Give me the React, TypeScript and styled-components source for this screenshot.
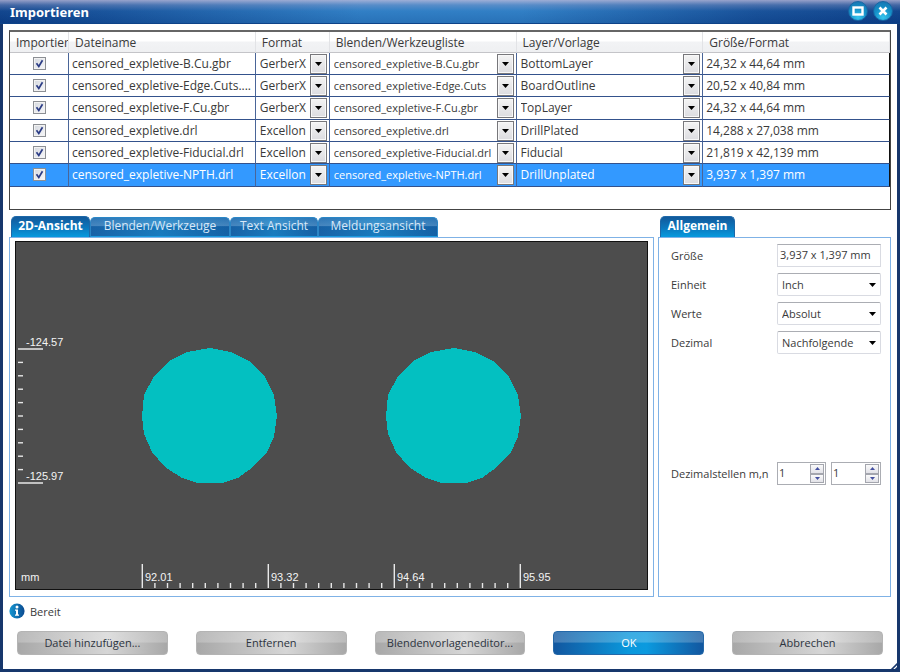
import React, { useState } from "react";
import styled, { createGlobalStyle, css } from "styled-components";

const GlobalStyle = createGlobalStyle`
  *, *::before, *::after { box-sizing: border-box; }
  body { margin: 0; background: #fff; }
  body, button, input, select {
    font-family: "Open Sans", "Noto Sans", sans-serif;
    font-size: 11px;
    color: #3a3a3a;
  }
`;

const Window = styled.div`
  position: relative;
  display: flex;
  flex-direction: column;
  min-height: 100vh;
  background: #fff;
  border: 3px solid #17376c;
  border-top: 0;
`;

const TitleBar = styled.header`
  display: flex;
  align-items: center;
  height: 24px;
  flex: none;
  margin: 0 -3px;
  padding: 0 7px 0 10px;
  border-bottom: 1px solid #0e4388;
  background:
    linear-gradient(180deg, rgba(196, 190, 220, 0.75) 0, rgba(150, 160, 205, 0.4) 5px, rgba(70, 120, 190, 0.1) 11px, rgba(0, 30, 100, 0.15) 100%),
    linear-gradient(90deg, #0d4189 0, #16529a 12%, #2f80c6 40%, #2f80c6 58%, #154f97 84%, #0d4189 100%);
`;

const Title = styled.h1`
  flex: 1;
  margin: 0;
  color: #fff;
  font-family: "Noto Sans", sans-serif;
  font-size: 13px;
  line-height: 20px;
  font-weight: 700;
`;

const RoundButton = styled.button`
  width: 20px;
  height: 20px;
  margin: 0 0 2px 5px;
  padding: 0;
  display: grid;
  place-items: center;
  border: 1px solid #1766a4;
  border-radius: 50%;
  background: radial-gradient(circle at 50% 85%, #35c4ee 0, #1490c8 50%, #1a70ac 100%);
`;

const TableFrame = styled.section`
  margin: 6px 6px 0;
  height: 180px;
  flex: none;
  border: 1px solid #444;
  border-top: 2px solid #666;
`;

const Table = styled.table`
  width: 100%;
  table-layout: fixed;
  border-collapse: separate;
  border-spacing: 0;
  font-size: 12px;
`;

const CheckCol = styled.col`
  width: 59px;
`;

const FormatCol = styled.col`
  width: 74px;
`;

const HeadCell = styled.th`
  height: 21px;
  padding: 1px 0 0 6px;
  overflow: hidden;
  white-space: nowrap;
  text-align: left;
  font-weight: 400;
  line-height: 18px;
  border-right: 1px solid #e2e3e6;
  border-bottom: 1px solid #c4c4c8;
  background: linear-gradient(#fff 0, #fff 45%, #f2f3f5 50%, #eff0f2 100%);
`;

const Row = styled.tr<{ $selected: boolean }>`
  height: 22px;
  &:nth-child(3n) { height: 23px; }
  ${(p) => p.$selected && css`
    background: #3399ff;
    && td, && select { color: #fff; }
  `}
`;

const Cell = styled.td<{ $center?: boolean }>`
  padding: 0 0 0 3px;
  overflow: hidden;
  white-space: nowrap;
  line-height: 18px;
  border-right: 1px solid #4a6598;
  border-bottom: 1px solid #34528c;
  ${(p) => p.$center && css`padding: 0; text-align: center;`}
  &:last-child { border-right-color: #111; }
`;

const Check = styled.input`
  appearance: none;
  display: block;
  width: 13px;
  height: 13px;
  margin: 0 auto;
  border: 1px solid #8c8f94;
  background: linear-gradient(135deg, #d4d8de, #f8f8fa);
  box-shadow: inset 0 0 0 1px #f2f2f2;
  grid-area: 1 / 1;
`;

const CheckBox = styled.label`
  display: inline-grid;
  place-items: center;
  vertical-align: middle;
  margin-bottom: 2px;
  svg { grid-area: 1 / 1; pointer-events: none; }
`;

const Combo = styled.div`
  display: grid;
  grid-template-columns: 1fr 17px;
  padding-right: 2px;
`;

const ComboSelect = styled.select<{ $compact?: boolean }>`
  grid-area: 1 / 1 / 2 / 3;
  appearance: none;
  width: 100%;
  min-width: 0;
  height: 20px;
  padding: 0 18px 0 1px;
  border: 0;
  background: transparent;
  font-size: ${(p) => (p.$compact ? 11 : 12)}px;
  line-height: 18px;
  text-overflow: clip;
`;

const ComboArrow = styled.span`
  grid-area: 1 / 2;
  display: grid;
  place-items: center;
  height: 20px;
  pointer-events: none;
  border: 1px solid #77777b;
  box-shadow: inset 0 0 0 1px #f8f8f8;
  background: linear-gradient(#f4f4f4, #dcdce0);
`;

const Panels = styled.main`
  display: flex;
  flex: 1;
  gap: 4px;
  margin: 6px 6px 0;
`;

const PanelColumn = styled.section<{ $side?: boolean }>`
  display: flex;
  flex-direction: column;
  ${(p) => (p.$side ? css`flex: 0 0 233px;` : css`flex: 1; min-width: 0;`)}
`;

const Tabs = styled.div`
  display: flex;
  align-items: flex-end;
  height: 21px;
  padding-left: 2px;
`;

const Tab = styled.button<{ $active?: boolean; $width: number }>`
  width: ${(p) => p.$width}px;
  height: ${(p) => (p.$active ? 21 : 20)}px;
  padding: 0 0 2px;
  border: 1px solid ${(p) => (p.$active ? "#1d68a8" : "#2b86c6")};
  border-bottom: ${(p) => (p.$active ? "0" : "1px solid #1a9ade")};
  border-radius: 5px 5px 0 0;
  font-size: 12px;
  line-height: 16px;
  white-space: nowrap;
  color: ${(p) => (p.$active ? "#fff" : "#d8e8f8")};
  font-weight: ${(p) => (p.$active ? 700 : 400)};
  background: ${(p) =>
    p.$active
      ? "linear-gradient(#12599b 0, #0b78be 55%, #069ade 100%)"
      : "linear-gradient(rgba(120, 190, 235, 0.2) 0, rgba(150, 195, 230, 0.35) 42%, rgba(0, 80, 150, 0.15) 48%, rgba(0, 90, 160, 0.1) 100%), linear-gradient(90deg, #1c64a8 0, #1c80c2 50%, #1862a6 100%)"};
`;

const Panel = styled.div`
  flex: 1;
  display: flex;
  flex-direction: column;
  border: 1px solid #7fb2e6;
`;

const Canvas = styled.svg`
  flex: 1;
  display: block;
  width: calc(100% - 10px);
  margin: 3px 5px 6px;
  border: 1px solid #111;
  background: #4d4d4d;
  font-family: "Liberation Sans", Arial, sans-serif;
  font-size: 11px;
`;

const Form = styled.form`
  display: flex;
  flex-direction: column;
  gap: 6px;
  padding: 6px 9px 0 12px;
`;

const Field = styled.div<{ $spaced?: boolean }>`
  display: grid;
  grid-template-columns: 1fr 104px;
  align-items: center;
  height: 23px;
  margin-top: ${(p) => (p.$spaced ? 102 : 0)}px;
`;

const TextInput = styled.input`
  width: 100%;
  height: 23px;
  padding: 0 2px 2px;
  border: 1px solid #d9dbe2;
  border-top-color: #abadb3;
  background: #fff;
`;

const DropBox = styled.div`
  display: grid;
  grid-template-columns: 1fr 12px;
  align-items: center;
  svg { grid-area: 1 / 2; pointer-events: none; }
`;

const DropSelect = styled.select`
  grid-area: 1 / 1 / 2 / 3;
  appearance: none;
  width: 100%;
  height: 23px;
  padding: 0 14px 0 4px;
  border: 1px solid #d9dbe2;
  border-top-color: #abadb3;
  border-radius: 2px;
  background: #fff;
`;

const Spinners = styled.div`
  display: grid;
  grid-template-columns: 49px 50px;
  justify-content: space-between;
`;

const Spinner = styled.div`
  display: flex;
  height: 23px;
  padding: 1px;
  border: 1px solid #abadb3;
`;

const SpinInput = styled.input`
  flex: 1;
  min-width: 0;
  padding: 0 0 3px;
  border: 0;
  background: transparent;
  outline: 0;
`;

const SpinButtons = styled.div`
  display: grid;
  grid-template-rows: 1fr 1fr;
  width: 14px;
`;

const SpinButton = styled.button`
  display: grid;
  place-items: center;
  padding: 0;
  border: 1px solid #a4a6ae;
  background: linear-gradient(#fafafa, #e2e2e8);
`;

const Status = styled.div`
  display: flex;
  align-items: center;
  gap: 5px;
  height: 16px;
  margin: 6px 6px 0;
`;

const Actions = styled.footer`
  display: flex;
  gap: 28px;
  padding: 12px 14px 14px;
`;

const ActionButton = styled.button<{ $primary?: boolean }>`
  flex: 1 1 0;
  min-width: 0;
  height: 24px;
  padding: 0;
  border: 1px solid ${(p) => (p.$primary ? "#2468a8" : "#b4b4b4")};
  border-radius: 4px;
  line-height: 18px;
  white-space: nowrap;
  color: ${(p) => (p.$primary ? "#fff" : "#2d3440")};
  background: linear-gradient(rgba(255, 255, 255, 0.2) 0, rgba(255, 255, 255, 0.22) 46%, rgba(255, 255, 255, 0) 50%),
    ${(p) =>
      p.$primary
        ? "linear-gradient(90deg, #1257a0 0, #0a98dc 50%, #0b9adf 62%, #1257a0 100%)"
        : "linear-gradient(90deg, #a8a8a8 0, #d6d6d6 60%, #a8a8a8 100%)"};
`;

const Grip = styled.svg`
  position: absolute;
  right: -2px;
  bottom: -2px;
`;

function Arrow() {
  return (
    <svg width="7" height="4" viewBox="0 0 7 4" aria-hidden="true">
      <path d="M0 0h7L3.5 4z" fill="#000" />
    </svg>
  );
}

function TableCombo({ value, label, compact }: { value: string; label: string; compact?: boolean }) {
  return (
    <Combo>
      <ComboSelect $compact={compact} defaultValue={value} aria-label={label}>
        <option>{value}</option>
      </ComboSelect>
      <ComboArrow><Arrow /></ComboArrow>
    </Combo>
  );
}

function DropDown({ id, value }: { id: string; value: string }) {
  return (
    <DropBox>
      <DropSelect id={id} defaultValue={value}>
        <option>{value}</option>
      </DropSelect>
      <Arrow />
    </DropBox>
  );
}

function NumberSpinner({ id, label }: { id: string; label?: string }) {
  const [value, setValue] = useState(1);
  return (
    <Spinner>
      <SpinInput id={id} type="text" inputMode="numeric" aria-label={label} value={value}
        onChange={(e) => setValue(Number(e.target.value) || 0)} />
      <SpinButtons>
        <SpinButton type="button" aria-label="Erhöhen" onClick={() => setValue(value + 1)}>
          <svg width="5" height="3" viewBox="0 0 5 3"><path d="M0 3h5L2.5 0z" fill="#4450a0" /></svg>
        </SpinButton>
        <SpinButton type="button" aria-label="Verringern" onClick={() => setValue(value - 1)}>
          <svg width="5" height="3" viewBox="0 0 5 3"><path d="M0 0h5L2.5 3z" fill="#4450a0" /></svg>
        </SpinButton>
      </SpinButtons>
    </Spinner>
  );
}

const files = [
  { name: "censored_expletive-B.Cu.gbr", format: "GerberX", list: "censored_expletive-B.Cu.gbr", layer: "BottomLayer", size: "24,32 x 44,64 mm" },
  { name: "censored_expletive-Edge.Cuts....", format: "GerberX", list: "censored_expletive-Edge.Cuts", layer: "BoardOutline", size: "20,52 x 40,84 mm" },
  { name: "censored_expletive-F.Cu.gbr", format: "GerberX", list: "censored_expletive-F.Cu.gbr", layer: "TopLayer", size: "24,32 x 44,64 mm" },
  { name: "censored_expletive.drl", format: "Excellon", list: "censored_expletive.drl", layer: "DrillPlated", size: "14,288 x 27,038 mm" },
  { name: "censored_expletive-Fiducial.drl", format: "Excellon", list: "censored_expletive-Fiducial.drl", layer: "Fiducial", size: "21,819 x 42,139 mm" },
  { name: "censored_expletive-NPTH.drl", format: "Excellon", list: "censored_expletive-NPTH.drl", layer: "DrillUnplated", size: "3,937 x 1,397 mm" },
];

const drillHole =
  "172,111 195,107 216,111 234,120 250,136 259,154 262,175 259,196 252,211 238,226 223,237 207,242 182,242 167,237 150,226 137,211 129,193 127,175 129,154 139,135 154,120";

const xLabels = ["92.01", "93.32", "94.64", "95.95"];
const minor = [1, 2, 3, 4, 5, 6, 7, 8, 9];

function BoardView() {
  return (
    <Canvas viewBox="1 1 631 347" role="img" aria-label="2D-Ansicht">
      <g fill="#03c0c1" shapeRendering="crispEdges">
        <polygon points={drillHole} />
        <polygon points={drillHole} transform="translate(244 0)" />
      </g>
      <g stroke="#e8e8e8" strokeWidth="1.4">
        <path d="M3 108h25M3 242h25" />
        {minor.map((n) => <path key={n} d={`M3 ${108 + n * 13.4}h5`} />)}
        {xLabels.map((label, i) => (
          <g key={label}>
            <path d={`M${127.3 + i * 126} 323v24`} />
            {i < 3 && minor.map((n) => <path key={n} d={`M${127.3 + i * 126 + n * 12.6} 342v5`} />)}
          </g>
        ))}
      </g>
      <g fill="#f4f4f4">
        <text x="11" y="105">-124.57</text>
        <text x="11" y="239">-125.97</text>
        <text x="6" y="340">mm</text>
        {xLabels.map((label, i) => <text key={label} x={130 + i * 126} y="340">{label}</text>)}
      </g>
    </Canvas>
  );
}

export default function App() {
  return (
    <>
      <GlobalStyle />
      <Window>
        <TitleBar>
          <Title>Importieren</Title>
          <RoundButton aria-label="Maximieren">
            <svg width="12" height="10" viewBox="0 0 12 10"><rect x="1.5" y="1.5" width="9" height="7" fill="none" stroke="#fff" strokeWidth="2.4" /></svg>
          </RoundButton>
          <RoundButton aria-label="Schließen">
            <svg width="10" height="10" viewBox="0 0 10 10"><path d="M1.5 1.5l7 7M8.5 1.5l-7 7" stroke="#fff" strokeWidth="2.6" /></svg>
          </RoundButton>
        </TitleBar>

        <TableFrame>
          <Table>
            <colgroup>
              <CheckCol /><col /><FormatCol /><col /><col /><col />
            </colgroup>
            <thead>
              <tr>
                {["Importier", "Dateiname", "Format", "Blenden/Werkzeugliste", "Layer/Vorlage", "Größe/Format"].map((h) => (
                  <HeadCell key={h}>{h}</HeadCell>
                ))}
              </tr>
            </thead>
            <tbody>
              {files.map((f, i) => (
                <Row key={f.name} $selected={i === 5}>
                  <Cell $center>
                    <CheckBox>
                      <Check type="checkbox" defaultChecked aria-label={f.name} />
                      <svg width="9" height="9" viewBox="0 0 9 9"><path d="M1.5 4.2L3.8 7.4 7.5 1.2" fill="none" stroke="#2b3c85" strokeWidth="1.7" /></svg>
                    </CheckBox>
                  </Cell>
                  <Cell>{f.name}</Cell>
                  <Cell><TableCombo value={f.format} label="Format" /></Cell>
                  <Cell><TableCombo compact value={f.list} label="Blenden/Werkzeugliste" /></Cell>
                  <Cell><TableCombo value={f.layer} label="Layer/Vorlage" /></Cell>
                  <Cell>{f.size}</Cell>
                </Row>
              ))}
            </tbody>
          </Table>
        </TableFrame>

        <Panels>
          <PanelColumn>
            <Tabs>
              <Tab $active $width={79}>2D-Ansicht</Tab>
              <Tab $width={140}>Blenden/Werkzeuge</Tab>
              <Tab $width={88}>Text Ansicht</Tab>
              <Tab $width={120}>Meldungsansicht</Tab>
            </Tabs>
            <Panel><BoardView /></Panel>
          </PanelColumn>
          <PanelColumn $side>
            <Tabs>
              <Tab $active $width={75}>Allgemein</Tab>
            </Tabs>
            <Panel>
              <Form onSubmit={(e) => e.preventDefault()}>
                <Field>
                  <label htmlFor="size">Größe</label>
                  <TextInput id="size" defaultValue="3,937 x 1,397 mm" />
                </Field>
                <Field>
                  <label htmlFor="unit">Einheit</label>
                  <DropDown id="unit" value="Inch" />
                </Field>
                <Field>
                  <label htmlFor="values">Werte</label>
                  <DropDown id="values" value="Absolut" />
                </Field>
                <Field>
                  <label htmlFor="decimal">Dezimal</label>
                  <DropDown id="decimal" value="Nachfolgende" />
                </Field>
                <Field $spaced>
                  <label htmlFor="digits-m">Dezimalstellen m,n</label>
                  <Spinners>
                    <NumberSpinner id="digits-m" />
                    <NumberSpinner id="digits-n" label="Dezimalstellen n" />
                  </Spinners>
                </Field>
              </Form>
            </Panel>
          </PanelColumn>
        </Panels>

        <Status>
          <svg width="16" height="16" viewBox="0 0 16 16" aria-hidden="true">
            <defs>
              <linearGradient id="info" x1="0" y1="0" x2="1" y2="0">
                <stop offset="0" stopColor="#1597d2" />
                <stop offset="1" stopColor="#0b4a90" />
              </linearGradient>
            </defs>
            <circle cx="8" cy="8" r="7.6" fill="url(#info)" />
            <circle cx="8" cy="4" r="1.5" fill="#fff" />
            <path d="M6 6.5h3v5h1v1.3H6v-1.3h1V7.8H6z" fill="#fff" />
          </svg>
          <span>Bereit</span>
        </Status>

        <Actions>
          <ActionButton>Datei hinzufügen...</ActionButton>
          <ActionButton>Entfernen</ActionButton>
          <ActionButton>Blendenvorlageneditor...</ActionButton>
          <ActionButton $primary>OK</ActionButton>
          <ActionButton>Abbrechen</ActionButton>
        </Actions>
        <Grip width="10" height="10" viewBox="0 0 10 10" aria-hidden="true">
          <path d="M1 10L10 1M5 10L10 5" stroke="#17376c" strokeWidth="1.6" />
        </Grip>
      </Window>
    </>
  );
}
